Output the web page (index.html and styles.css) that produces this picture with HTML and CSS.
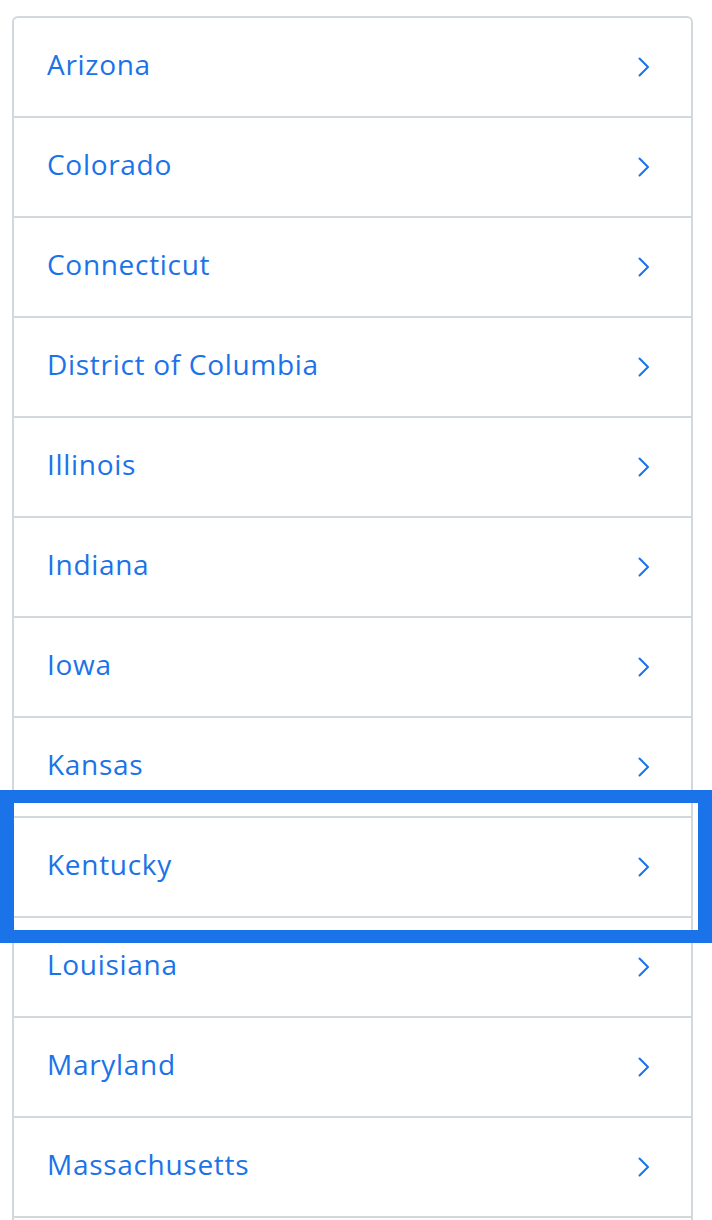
FILE: index.html
```html
<!DOCTYPE html>
<html lang="en">
<head>
<meta charset="utf-8">
<title>States</title>
<link rel="stylesheet" href="styles.css">
</head>
<body>
<ul class="list">
  <li class="row"><span class="label">Arizona</span><svg class="chev" viewBox="0 0 12 20"><path d="M1.5 1.5 L10 10 L1.5 18.5"/></svg></li>
  <li class="row"><span class="label">Colorado</span><svg class="chev" viewBox="0 0 12 20"><path d="M1.5 1.5 L10 10 L1.5 18.5"/></svg></li>
  <li class="row"><span class="label">Connecticut</span><svg class="chev" viewBox="0 0 12 20"><path d="M1.5 1.5 L10 10 L1.5 18.5"/></svg></li>
  <li class="row"><span class="label">District of Columbia</span><svg class="chev" viewBox="0 0 12 20"><path d="M1.5 1.5 L10 10 L1.5 18.5"/></svg></li>
  <li class="row"><span class="label">Illinois</span><svg class="chev" viewBox="0 0 12 20"><path d="M1.5 1.5 L10 10 L1.5 18.5"/></svg></li>
  <li class="row"><span class="label">Indiana</span><svg class="chev" viewBox="0 0 12 20"><path d="M1.5 1.5 L10 10 L1.5 18.5"/></svg></li>
  <li class="row"><span class="label">Iowa</span><svg class="chev" viewBox="0 0 12 20"><path d="M1.5 1.5 L10 10 L1.5 18.5"/></svg></li>
  <li class="row"><span class="label">Kansas</span><svg class="chev" viewBox="0 0 12 20"><path d="M1.5 1.5 L10 10 L1.5 18.5"/></svg></li>
  <li class="row"><span class="label">Kentucky</span><svg class="chev" viewBox="0 0 12 20"><path d="M1.5 1.5 L10 10 L1.5 18.5"/></svg><span class="focus-box"></span></li>
  <li class="row"><span class="label">Louisiana</span><svg class="chev" viewBox="0 0 12 20"><path d="M1.5 1.5 L10 10 L1.5 18.5"/></svg></li>
  <li class="row"><span class="label">Maryland</span><svg class="chev" viewBox="0 0 12 20"><path d="M1.5 1.5 L10 10 L1.5 18.5"/></svg></li>
  <li class="row row-last"><span class="label">Massachusetts</span><svg class="chev" viewBox="0 0 12 20"><path d="M1.5 1.5 L10 10 L1.5 18.5"/></svg></li>
</ul>
</body>
</html>
```

FILE: styles.css
```css
html, body {
  margin: 0;
  padding: 0;
  background: #ffffff;
}
body {
  font-family: "Open Sans", "Liberation Sans", sans-serif;
  overflow: hidden;
  height: 1220px;
}
.list {
  list-style: none;
  margin: 16px 0 0 12px;
  padding: 0 0 40px;
  width: 677px;
  border: 2px solid #d3d8dc;
  border-radius: 6px 6px 0 0;
  background: #fff;
}
.row {
  position: relative;
  display: flex;
  align-items: center;
  justify-content: space-between;
  height: 98px;
  padding: 0 41px 0 33px;
  border-top: 2px solid #d3d8dc;
}
.row:first-child {
  border-top: none;
}
.row-last {
  border-bottom: 2px solid #d3d8dc;
}
.label {
  font-size: 28px;
  letter-spacing: 0.7px;
  color: #1a73e8;
  line-height: 1;
  margin-top: -6px;
}
.chev {
  width: 12px;
  height: 20px;
  fill: none;
  stroke: #1a73e8;
  stroke-width: 2;
  stroke-linecap: round;
  stroke-linejoin: round;
}
.focus-box {
  position: absolute;
  left: -14px;
  right: -21px;
  top: -28px;
  bottom: -27px;
  border: 13px solid #1a73e8;
  border-left-width: 14px;
  border-right-width: 14px;
  pointer-events: none;
}
```
